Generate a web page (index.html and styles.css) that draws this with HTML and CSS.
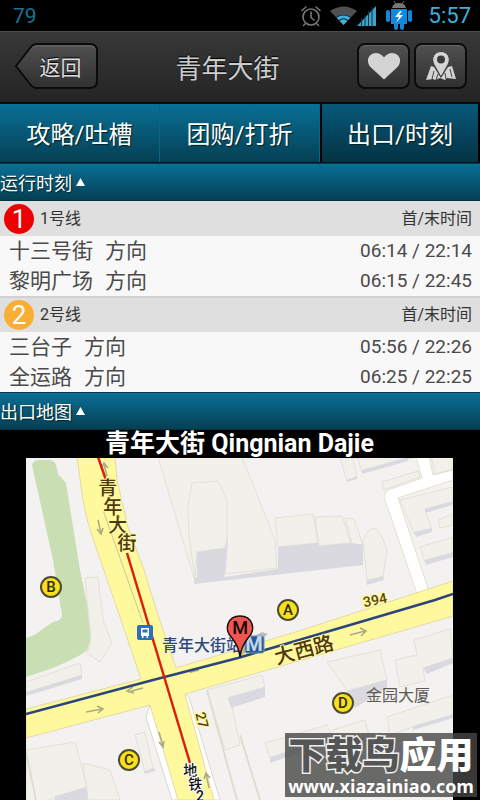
FILE: index.html
```html
<!DOCTYPE html>
<html lang="zh-CN">

<head>
    <meta charset="UTF-8">
    <meta name="viewport" content="width=device-width, initial-scale=1.0">
    <title>青年大街</title>
    <link rel="stylesheet" href="styles.css">
</head>

<body>
    <div class="status-bar">
        <span class="battery">79</span>
        <div class="status-icons">
            <svg width="22" height="22" viewBox="0 0 22 22" fill="none" stroke="#77777a" stroke-width="1.6" stroke-linecap="round">
                <circle cx="11" cy="12" r="8"/>
                <path d="M11 7v5.500l3 2.500M2 5.500l4-3.500M20 5.500l-4-3.500M5 19l-1.500 1.500M17 19l1.500 1.500"/>
            </svg>
            <svg class="wifi" width="27" height="19" viewBox="0 0 27 19">
                <path d="M0 5Q13.500-4 27 5L13.500 19Z" fill="#505050"/>
                <path d="M6 11Q13.500 6 21 11L13.500 19Z" fill="#3fb0dc"/>
                <path d="M6 11.500Q13.500 6.500 21 11.500M9 14.500Q13.500 11 18 14.500" fill="none" stroke="#0c2a38" stroke-width="1.200"/>
            </svg>
            <svg class="signal" width="19" height="20" viewBox="0 0 19 20">
                <path d="M0 20L19 0V20Z" fill="#3fa0c8"/>
                <path d="M4.500 12v8M8 9v11M11.500 5v15M15 1v19" stroke="#0c3444"/>
            </svg>
            <svg class="robot" width="28" height="30" viewBox="0 0 28 30">
                <path d="M7 7Q8 2 14 2T21 7Z" fill="#777"/>
                <path d="M9 0l2 3M19 0l-2 3" stroke="#777"/>
                <path d="M6 8h16v15H19v4q0 2-2 2t-2-2v-4h-2v4q0 2-2 2t-2-2v-4H6Z" fill="#1188dc"/>
                <rect x="1" y="9" width="4" height="12" rx="2" fill="#1188dc"/>
                <rect x="23" y="9" width="4" height="12" rx="2" fill="#1188dc"/>
                <path d="M15 10l-5 6h4l-3 6 7-8h-4l3-4Z" fill="#fff"/>
            </svg>
            <span class="clock">5:57</span>
        </div>
    </div>

    <header class="header">
        <button type="button" class="back">
            <svg class="back-shape" width="84" height="46" viewBox="0 0 84 46">
                <defs>
                    <linearGradient id="btn" x1="0" y1="0" x2="0" y2="1">
                        <stop offset="0" stop-color="#505050"/>
                        <stop offset="1" stop-color="#303030"/>
                    </linearGradient>
                </defs>
                <path d="M2 23L16 5Q19 1 23 1H76Q83 1 83 8V38Q83 45 76 45H23Q19 45 16 41Z" fill="url(#btn)" stroke="#0b0b0b" stroke-width="2"/>
                <path d="M18 5Q20 3 23 3H76Q81 3 81 7" fill="none" stroke="#6a6a6a"/>
            </svg>
            <span class="back-text">返回</span>
        </button>
        <h1>青年大街</h1>
        <div class="actions">
            <button type="button" class="icon-button" aria-label="收藏">
                <svg width="34" height="28" viewBox="0 0 34 28">
                    <path d="M17 27.500L4 15.500C0 11.500 0 6 3.500 3 7.500-.5 13.500.5 17 5.500 20.500.5 26.500-.5 30.500 3 34 6 34 11.500 30 15.500Z" fill="#d4d4d4"/>
                </svg>
            </button>
            <button type="button" class="icon-button" aria-label="地图">
                <svg width="32" height="30" viewBox="0 0 32 30">
                    <path d="M6 15L9 16 16 27 23 16 27 15 31 28 22 27 20 29 15 27 10 29 8 28 1 29Z" fill="#d4d4d4"/>
                    <path d="M9 20L7 28M13 23l-2 6M20 22l1 6M25 18l2 8" stroke="#444" fill="none"/>
                    <path d="M16 26L9 13.500C5.500 7 9.500.5 16 .5S26.500 7 23 13.500Z" fill="#d4d4d4" stroke="#3b3b3b"/>
                    <circle cx="16" cy="8.500" r="4" fill="#3b3b3b"/>
                </svg>
            </button>
        </div>
    </header>

    <nav class="tabs">
        <button type="button" class="tab">攻略/吐槽</button>
        <button type="button" class="tab">团购/打折</button>
        <button type="button" class="tab active">出口/时刻</button>
    </nav>

    <main>
        <button type="button" class="section-title">运行时刻<svg width="9" height="8" viewBox="0 0 9 8"><path d="M4.500 0L9 8H0Z" fill="#fff"/></svg></button>

        <table class="timetable">
            <thead>
                <tr>
                    <th scope="col"><div class="line"><span class="line-number red">1</span>1号线</div></th>
                    <th scope="col" class="time">首/末时间</th>
                </tr>
            </thead>
            <tbody>
                <tr><td><span class="stop">十三号街</span>方向</td><td class="time">06:14 / 22:14</td></tr>
                <tr><td><span class="stop">黎明广场</span>方向</td><td class="time">06:15 / 22:45</td></tr>
            </tbody>
        </table>
        <table class="timetable">
            <thead>
                <tr>
                    <th scope="col"><div class="line"><span class="line-number orange">2</span>2号线</div></th>
                    <th scope="col" class="time">首/末时间</th>
                </tr>
            </thead>
            <tbody>
                <tr><td><span class="stop">三台子</span>方向</td><td class="time">05:56 / 22:26</td></tr>
                <tr><td><span class="stop">全运路</span>方向</td><td class="time">06:25 / 22:25</td></tr>
            </tbody>
        </table>

        <button type="button" class="section-title">出口地图<svg width="9" height="8" viewBox="0 0 9 8"><path d="M4.500 0L9 8H0Z" fill="#fff"/></svg></button>

        <section class="exit-map">
            <h2>青年大街 Qingnian Dajie</h2>
            <svg class="map" viewBox="26 458 427 342">
                <rect x="26" y="457" width="427" height="343" fill="#f3f2f1"/>

                <!-- park -->
                <path d="M32 465Q33 460 40 460H50Q55 461 56 465L58 474 66 483 80 570 91 624Q92 640 87 650 83 655 53 668L26 677V638Q34 636 40 631L53 622Q62 621 62 615L53 560Z" fill="#c9dfb3"/>

                <!-- buildings -->
                <g fill="#f2f0ea" stroke="#e3e0d8">
                    <path d="M158 457H242L275 540 277 568 194 578Z"/>
                    <path d="M192 483L218 481 227 500V538L225 548 197 552 195 578 189 537 188 507Z"/>
                    <path d="M275 518L313 514 318 543 278 547ZM315 517L342 516 351 543 319 546ZM345 518L354 519 363 545 352 544Z"/>
                    <path d="M363 540Q368 529 374 528 380 529 387 550L383 577 367 580Z"/>
                    <path d="M340 457H353L357 477 347 481ZM357 457H415L362 472ZM382 482L418 471 420 477 384 490ZM431 457H453V469L435 474Z"/>
                    <path d="M400 500L453 487V502L425 509 432 530 414 533ZM438 520L453 514V525L440 528ZM420 547L453 537V553L425 562Z"/>
                    <path d="M85 578L98 577 103 620 112 643 100 662 87 653 91 640Z"/>
                    <path d="M26 682L80 663 82 675 26 693ZM26 750L75 742 87 787 26 808ZM83 763L110 770 120 800H88ZM135 735L145 732 153 768 145 772Z"/>
                    <path d="M207 690L262 675 265 687 230 697 240 745 225 750ZM327 662L380 650 387 680 347 691Z"/>
                    <path d="M395 660L417 655 414 640 450 629 453 658 423 668 425 681 400 687ZM387 717L453 695V716L413 727 390 735Z"/>
                    <path d="M265 743L327 725 332 737 270 758ZM332 730L365 720 370 740 335 750Z"/>
                </g>
                <g fill="#d9d9df">
                    <path d="M197 552L225 548 228 536 226 570 224 577 277 569 363 560V565L194 584V578H197Z"/>
                    <path d="M278 547L318 543 319 546 351 543 363 545V565L278 570Z"/>
                    <path d="M366 581L383 576 384 580 367 585ZM362 470L408 457V461L362 474ZM347 480L357 476V479L347 482Z"/>
                    <path d="M425 509L453 501V505L425 513ZM414 532L432 528V532L416 537ZM425 560L453 552V557L426 565Z"/>
                    <path d="M26 692L82 675V679L26 696ZM55 796L87 787 88 800H55ZM144 771L155 768V771L145 774Z"/>
                    <path d="M228 698L265 687V697L231 708ZM347 691L387 680V688L355 708ZM423 668L453 658V663L427 674ZM413 726L453 714V718L413 730ZM270 757L332 737V742L270 763Z"/>
                </g>

                <!-- side roads -->
                <path d="M417 594L384 497Q384 492 388 490L422 478 416 457H429L433 475 453 470V480L398 498 429 591Z" fill="#fff" stroke="#e4dfd0"/>
                <path d="M150 705L146 717 172 800H220L189 697 184 693Z" fill="#fff" stroke="#ddd8c8"/>
                <path d="M207 690L237 800M26 752L36 800M240 735L260 800" stroke="#e0ddd0" stroke-width="2" fill="none"/>

                <!-- main roads -->
                <path d="M77 457L83 500Q86 520 97 550L121 620 141 679 26 709V738L150 705 178 800H214L185 694 453 616V581L302 630 176 668 158 615 143 567 128 527 117 480 115 457Z" fill="#fdf99c" stroke="#e6d8a8"/>
                <path d="M103 510L143 623" stroke="#c9c894" stroke-width="1"/>
                <g stroke="#a9aa83" stroke-width="1.500" fill="none">
                    <path d="M98 520l3 13M97 529l4 5 2-6M107 476l-3-12M101 469l3-6 4 5"/>
                    <path d="M86 712l16-3M97 706l6 3-5 4M143 688l-15 4M133 687l-6 4 7 2M159 732l4 14M159 742l4 5 1-6M209 788l-3-14M204 779l2-6 4 5"/>
                    <path d="M350 635l15-4M360 628l6 3-5 5M199 670l-8 2M194 669l-4 4"/>
                </g>
                <path d="M26 714L153 680 238 658 265 650 435 600 453 594" fill="none" stroke="#2b447c" stroke-width="2.500"/>
                <path d="M98 457L106 480M127 553L190 763M195 776l5 16M109 498l2 4M118 515l1 3" fill="none" stroke="#d9200f" stroke-width="2.500"/>

                <!-- road names -->
                <text class="road-name">
                    <tspan x="110" y="495">青</tspan>
                    <tspan x="115" y="514">年</tspan>
                    <tspan x="120" y="532">大</tspan>
                    <tspan x="127" y="550">街</tspan>
                </text>
                <text class="road-name large" transform="translate(304 650) rotate(-15)" dy="7">大西路</text>
                <text class="road-number" transform="translate(375 600) rotate(-12)" dy="5">394</text>
                <text class="road-number" transform="translate(202 720) rotate(76)" dy="5">27</text>
                <text class="metro-name">
                    <tspan x="192" y="775">地</tspan>
                    <tspan x="197" y="789">铁</tspan>
                    <tspan x="200" y="801">2</tspan>
                </text>
                <text class="station-name" x="162" y="651">青年大街站</text>
                <text class="building-name" x="366" y="701">金园大厦</text>

                <!-- bus stop -->
                <rect x="137" y="625" width="16" height="15" rx="2" fill="#2c70b8"/>
                <path d="M141 628h8v8h-1v2h-1.500v-2h-3v2H142v-2h-1Z" fill="#fff"/>
                <path d="M142.500 629.500h5v3h-5Z" fill="#2c70b8"/>

                <!-- metro sign and pin -->
                <path d="M240 657L268 634 262 632 246 640Z" fill="#555" opacity=".35"/>
                <rect x="245" y="636" width="19" height="17" rx="2" fill="#1f5c9c" stroke="#7c95b0"/>
                <text class="metro-sign" x="254" y="651">M</text>
                <path d="M240 657Q239 647 232 638C223 629 228 616 240 616S257 629 248 638Q241 647 240 657Z" fill="#f0564f" stroke="#1c0d0c" stroke-width="1.500"/>
                <text class="pin-letter" x="240" y="634">M</text>

                <!-- exits -->
                <g class="exit">
                    <circle cx="51" cy="587" r="10"/>
                    <circle cx="288" cy="610" r="10"/>
                    <circle cx="129" cy="760" r="10"/>
                    <circle cx="343" cy="703" r="10"/>
                    <text x="51" y="592">B</text>
                    <text x="288" y="615">A</text>
                    <text x="129" y="765">C</text>
                    <text x="343" y="708">D</text>
                </g>
            </svg>
            <div class="watermark">
                <div class="mark-name"><span class="outlined">下载鸟</span>应用</div>
                <div class="mark-url">www.xiazainiao.com</div>
            </div>
        </section>
    </main>
</body>

</html>
```

FILE: styles.css
```css
* {
    box-sizing: border-box;
}
body {
    margin: 0;
    background: #000;
    color: #fff;
    font-family: Roboto, "Noto Sans CJK SC", sans-serif;
}
button {
    margin: 0;
    padding: 0;
    border: none;
    background: none;
    color: inherit;
    font-family: inherit;
    cursor: pointer;
}
svg {
    display: block;
}

/* status bar */
.status-bar {
    display: flex;
    align-items: center;
    justify-content: space-between;
    height: 31px;
    padding: 0 9px 0 13px;
}
.battery {
    color: #1b7396;
    font-size: 21px;
}
.status-icons {
    display: flex;
    align-items: center;
}
.wifi {
    margin-left: 8px;
}
.robot {
    margin: 0 16px 0 9px;
}
.clock {
    color: #3fb0dc;
    font-size: 22px;
}

/* header */
.header {
    display: flex;
    align-items: center;
    height: 73px;
    padding: 0 13px 2px 14px;
    border-top: 1px solid #4c4c4c;
    border-bottom: 2px solid #0a0a0a;
    background: linear-gradient(#383838, #242424);
}
.back {
    display: grid;
    align-items: center;
}
.back-shape,
.back-text {
    grid-area: 1 / 1;
}
.back-text {
    padding-left: 9px;
    color: #ddd;
    font-size: 21px;
    text-shadow: 0 -1px 1px #000;
}
h1 {
    flex: 1;
    margin: 0;
    color: #ccc;
    font-size: 26px;
    font-weight: normal;
    text-align: center;
    text-shadow: 0 -1px 1px #000;
}
.actions {
    display: flex;
    gap: 4px;
}
.icon-button {
    display: flex;
    align-items: center;
    justify-content: center;
    width: 53px;
    height: 46px;
    border: 2px solid #0b0b0b;
    border-radius: 8px;
    background: linear-gradient(#505050, #303030);
    box-shadow: inset 0 1px 0 #6a6a6a;
}

/* tabs */
.tabs {
    display: grid;
    grid-template-columns: repeat(3, 1fr);
    height: 59px;
    border-bottom: 1px solid #04161d;
}
.tab {
    padding-bottom: 2px;
    border-right: 1px solid #0c6584;
    background: linear-gradient(#0a7095, #053f54);
    font-size: 24px;
    text-shadow: 1px 1px 1px #022;
}
.tab.active {
    border: 2px solid #000;
    border-width: 0 2px;
    background: linear-gradient(#07597a, #043243);
}

/* sections */
.section-title {
    display: flex;
    align-items: center;
    gap: 4px;
    width: 100%;
    height: 38px;
    border-top: 1px solid #04394d;
    border-bottom: 1px solid #03303f;
    background: linear-gradient(#0a7095, #053f54);
    font-size: 18px;
    text-shadow: 1px 1px 1px #022;
}

/* timetable */
.timetable {
    width: 100%;
    border-collapse: collapse;
    background: #f8f8f8;
    color: #4a4a4a;
}
.timetable + .timetable {
    border-top: 2px solid #d2d0d0;
}
.timetable th {
    height: 35px;
    padding: 0 8px 0 4px;
    background: #dfdfdf;
    color: #333;
    font-size: 16px;
    font-weight: normal;
    line-height: 20px;
    text-align: left;
}
.timetable td {
    height: 30px;
    padding: 0 8px 0 9px;
    font-size: 21px;
    line-height: 30px;
}
.timetable .time {
    text-align: right;
}
.timetable td.time {
    font-size: 19px;
}
.stop {
    margin-right: 12px;
}
.line {
    display: flex;
    align-items: center;
    gap: 6px;
}
.line-number {
    width: 30px;
    height: 30px;
    border-radius: 50%;
    color: #fff;
    font-size: 26px;
    line-height: 30px;
    text-align: center;
}
.red {
    background: #ec0000;
}
.orange {
    background: #fbae35;
}

/* exit map */
.exit-map {
    position: relative;
    padding: 0 27px 0 26px;
}
h2 {
    margin: 0;
    font-size: 25px;
    line-height: 28px;
    text-align: center;
}
.map {
    width: 100%;
    height: auto;
}
.road-name {
    fill: #4d3810;
    stroke: #fdf99c;
    stroke-width: 2px;
    paint-order: stroke;
    font-size: 19px;
    font-weight: 500;
    text-anchor: middle;
}
.road-name.large {
    font-size: 20px;
}
.road-number {
    fill: #5a4415;
    stroke: #fdf99c;
    stroke-width: 3px;
    paint-order: stroke;
    font-size: 14px;
    font-weight: 500;
    text-anchor: middle;
}
.metro-name {
    fill: #111;
    stroke: #fff;
    stroke-width: 2px;
    paint-order: stroke;
    font-size: 14px;
    font-weight: 500;
    text-anchor: middle;
}
.station-name {
    fill: #2b4a7c;
    font-size: 16px;
    font-weight: 500;
}
.building-name {
    fill: #5f5854;
    font-size: 16px;
}
.metro-sign {
    fill: #c8d6e4;
    font-size: 20px;
    font-weight: bold;
    text-anchor: middle;
}
.pin-letter {
    fill: #150505;
    font-size: 18px;
    font-weight: 500;
    text-anchor: middle;
}
.exit circle {
    fill: #f7e01c;
    stroke: #4e4a30;
    stroke-width: 2px;
}
.exit text {
    fill: #2e2a10;
    font-size: 15px;
    font-weight: 500;
    text-anchor: middle;
}

/* site mark over the map corner */
.watermark {
    position: absolute;
    right: 3px;
    bottom: 3px;
    padding: 5px 3px 1px;
    background: rgba(70, 70, 70, 0.8);
    text-align: center;
    white-space: nowrap;
}
.mark-name {
    font-size: 37px;
    font-weight: 900;
    line-height: 38px;
}
.outlined {
    color: #555;
    -webkit-text-stroke: 3px #eee;
    paint-order: stroke;
}
.mark-url {
    font-family: "Open Sans", sans-serif;
    font-size: 18px;
    font-weight: bold;
    line-height: 20px;
}
```
